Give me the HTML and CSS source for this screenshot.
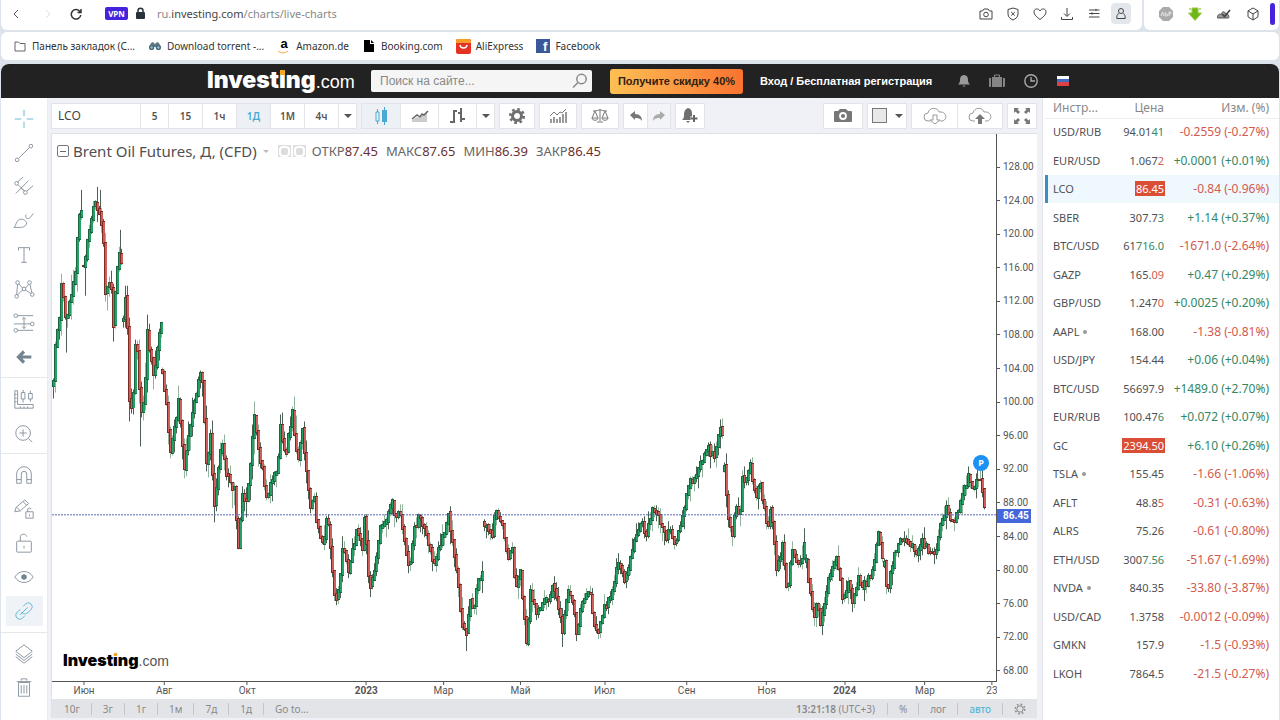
FILE: index.html
```html
<!DOCTYPE html>
<html lang="ru">
<head>
<meta charset="utf-8">
<title>Brent Oil Futures — Investing.com</title>
<link rel="stylesheet" href="styles.css">
</head>
<body>
<div class="nav-row">
  <div class="address-bar">
    <button class="nav-btn" aria-label="Назад"><svg width="14" height="14" viewBox="0 0 14 14"><path d="M9 3L5 7l4 4"/></svg></button>
    <button class="nav-btn faded" aria-label="Вперёд"><svg width="14" height="14" viewBox="0 0 14 14"><path d="M5 3l4 4-4 4"/></svg></button>
    <button class="nav-btn reload" aria-label="Обновить"><svg width="14" height="14" viewBox="0 0 14 14"><path d="M11 4.500A4.800 4.800 0 1 0 11.800 8M12 2v3.500H8.500"/></svg></button>
    <button class="vpn">VPN</button>
    <svg class="lock" width="11" height="13" viewBox="0 0 11 13"><path d="M3 6V3.800a2.500 2.500 0 0 1 5 0V6" fill="none" stroke="#26333a" stroke-width="1.500"/><rect x="1" y="5" width="9" height="7" rx="1" fill="#26333a"/></svg>
    <div class="url"><span>ru.</span><b>investing.com</b><span>/charts/live-charts</span></div>
    <div class="tools">
      <button aria-label="Снимок"><svg width="16" height="16" viewBox="0 0 16 16"><path d="M2 5h2.500L6 3h4l1.500 2H14v8H2z"/><circle cx="8" cy="8.500" r="2.300"/></svg></button>
      <button aria-label="Защита"><svg width="16" height="16" viewBox="0 0 16 16"><path d="M8 2l5 1.500V8c0 3-2.500 5-5 6-2.500-1-5-3-5-6V3.500zM6.200 6l3.600 3.600M9.800 6L6.200 9.600"/></svg></button>
      <button aria-label="Избранное"><svg width="16" height="16" viewBox="0 0 16 16"><path d="M8 13.500C5 11 2 9 2 5.800 2 2.500 6.500 1.800 8 5c1.500-3.200 6-2.500 6 .8C14 9 11 11 8 13.500z"/></svg></button>
      <button aria-label="Загрузки"><svg width="16" height="16" viewBox="0 0 16 16"><path d="M8 2v8M5 7.500l3 3 3-3M2.500 11v2.500h11V11"/></svg></button>
      <button aria-label="Настройки"><svg width="16" height="16" viewBox="0 0 16 16"><path d="M3 4h10.500M3 7.500h10.500M3 11h10.500M10 2.800v2.400M6 6.300v2.400"/></svg></button>
      <button class="active" aria-label="Профиль"><svg width="16" height="16" viewBox="0 0 16 16"><circle cx="8" cy="5" r="2.500"/><path d="M5.800 7.500C4 8.500 3.800 10 3.800 12.500h8.400c0-2.500-.2-4-2-5"/></svg></button>
    </div>
  </div>
  <div class="extensions">
    <button aria-label="AdBlock"><svg width="16" height="16" viewBox="0 0 16 16"><path d="M5 1h6l4 4v6l-4 4H5l-4-4V5z" fill="#aaa" stroke="none"/><path d="M3 10l1.500-4L6 10M7.200 6v4h1.500a1 1 0 0 0 0-2H7.200M11 10V6h1.300a1 1 0 0 1 0 2H11" stroke="#e6e6e6"/></svg></button>
    <button aria-label="SaveFrom"><svg width="16" height="16" viewBox="0 0 16 16"><path d="M5 2h6v5h3.500L8 14.500 1.500 7H5z" fill="#70b51c" stroke="#97cd38"/><path d="M2 3h2M12 3h2" stroke="#70b51c"/></svg></button>
    <button aria-label="Расширение"><svg width="16" height="16" viewBox="0 0 16 16"><path d="M1.500 12c0-4 2-4 3.500-3.500C6 5 9 5 9.500 8c3-1 4 3 3 4z" fill="#999" stroke="#555"/><path d="M6 8l2.500 2.500L14 4" stroke-width="1.600"/></svg></button>
    <button aria-label="Расширения"><svg width="16" height="16" viewBox="0 0 16 16"><path d="M8 2l5 2.800v6L8 14l-5-3.200v-6zM3 4.800L8 8l5-3.200M8 8v6"/></svg></button>
    <i class="side-mark"></i>
  </div>
</div>
<nav class="bookmarks">
  <a href="#"><svg width="14" height="14" viewBox="0 0 14 14"><path d="M2 3h3.500L7 4.500h5V12H2z" fill="none" stroke="#666"/></svg>Панель закладок (С...</a>
  <a href="#"><svg width="14" height="14" viewBox="0 0 14 14"><path d="M3 4l2-1 2 2 2-2 2 1 2 4H1z" fill="#607985"/><circle cx="3.600" cy="8.500" r="2.600" fill="#486774"/><circle cx="10.400" cy="8.500" r="2.600" fill="#486774"/><circle cx="3.600" cy="8.500" r="1.200" fill="#86c5e4"/><circle cx="10.400" cy="8.500" r="1.200" fill="#86c5e4"/></svg>Download torrent -...</a>
  <a href="#"><span class="amazon">a<svg width="12" height="4" viewBox="0 0 12 4"><path d="M1 1c3 2.500 7 2.500 10 0" fill="none" stroke="#f7a63c"/></svg></span>Amazon.de</a>
  <a href="#"><svg width="14" height="14" viewBox="0 0 14 14"><path d="M2 1h6v4h4v8H2z"/><path d="M9 1l3 3H9z"/></svg>Booking.com</a>
  <a href="#"><svg width="15" height="15" viewBox="0 0 15 15"><path d="M0 2q0-2 2-2h11q2 0 2 2v11q0 2-2 2H2q-2 0-2-2z" fill="#e43225"/><path d="M0 2q0-2 2-2h11q2 0 2 2v2H0z" fill="#f99b29"/><path d="M4 6c.5 4 6.500 4 7 0" fill="none" stroke="#fff" stroke-width="1.500"/></svg>AliExpress</a>
  <a href="#"><span class="fb">f</span>Facebook</a>
</nav>

<div class="site">
  <header class="site-header">
    <a class="logo" href="#"><b>Invest<span class="dot-i">i</span>ng</b><span class="com">.com</span></a>
    <form class="search"><input type="search" aria-label="Поиск" placeholder="Поиск на сайте..."><button type="button" aria-label="Найти"><svg width="16" height="16" viewBox="0 0 16 16"><circle cx="9.500" cy="6" r="4.700"/><path d="M6 9.500L1 14.500"/></svg></button></form>
    <button class="promo">Получите скидку 40%</button>
    <a class="login" href="#">Вход / Бесплатная регистрация</a>
    <div class="header-icons">
      <svg width="14" height="14" viewBox="0 0 14 14"><path d="M7 1c3 .5 4 2 4 5 0 2 .5 3 2 4.500H1C2.500 9 3 8 3 6c0-3 1-4.500 4-5zM5.500 11.500h3L7 13z" fill="#9a9a9a"/></svg>
      <svg width="16" height="14" viewBox="0 0 16 14"><path d="M0 4h2v9H1q-1 0-1-1zM3 3h10v10H3zM14 4h2v8q0 1-1 1h-1z" fill="#858585"/><path d="M5.500 3V1h5v2" fill="none" stroke="#858585"/></svg>
      <svg width="16" height="16" viewBox="0 0 16 16"><circle cx="8" cy="8" r="6.200" fill="none" stroke="#aaa" stroke-width="1.400"/><path d="M8 4v4h4" fill="none" stroke="#aaa" stroke-width="1.400"/></svg>
      <svg width="12" height="10" viewBox="0 0 12 10"><path fill="#fff" d="M0 0h12v4H0z"/><path fill="#3f6dc0" d="M0 3h12v4H0z"/><path fill="#dc4145" d="M0 6h12v4H0z"/></svg>
    </div>
  </header>

  <main class="workspace">
    <aside class="draw-tools">
      <div class="tool-group">
        <button aria-label="Перекрестие"><svg viewBox="0 0 24 24"><path d="M2 12h7M15 12h7M12 2v7M12 15v7" stroke="#62aed3"/></svg></button>
        <button aria-label="Линия"><svg viewBox="0 0 24 24"><circle cx="4.500" cy="19.500" r="2"/><circle cx="19.500" cy="4.500" r="2"/><path d="M6 18L18 6"/></svg></button>
        <button aria-label="Вилы"><svg viewBox="0 0 24 24"><circle cx="4" cy="8" r="2"/><circle cx="13.500" cy="18" r="2"/><path d="M5.500 9.500l7 7M5 6.500L11 1M3 19L17 5M15 16.500l7-6M9 13l3 3"/></svg></button>
        <button aria-label="Кисть"><svg viewBox="0 0 24 24"><path d="M1 19c3-2 2-9 8-9 3 0 5 2 6 4-1 4-4 5-7 5zM22 4l-3 4c-3 3-6 1-5-3"/></svg></button>
        <button aria-label="Текст"><svg viewBox="0 0 24 24"><path d="M6 7V4h12v3M12 4v16M9 20h6"/></svg></button>
        <button aria-label="Фигуры"><svg viewBox="0 0 24 24"><circle cx="5" cy="5" r="2"/><circle cx="18" cy="5" r="2"/><circle cx="4" cy="20" r="2"/><circle cx="21" cy="18" r="2"/><circle cx="12" cy="12" r="2"/><path d="M5 7L4 18M6.500 6.500L10.500 11M13.500 11l3.500-4M18.500 7l2 9M5 18.500L10.500 13M13.500 13l6 4"/></svg></button>
        <button aria-label="Прогноз"><svg viewBox="0 0 24 24"><circle cx="3" cy="4" r="2"/><circle cx="3" cy="20" r="2"/><circle cx="21" cy="13" r="2"/><path d="M5 4h17M5 20h17M1 13h18M12 6v12M10 8l2-2 2 2M10 16l2 2 2-2"/></svg></button>
        <button aria-label="Стрелка"><svg viewBox="0 0 24 24"><path d="M20 12H8M12 6l-6 6 6 6" stroke="#75858f" stroke-width="3.500"/></svg></button>
      </div>
      <div class="tool-group">
        <button aria-label="Линейка"><svg viewBox="0 0 24 24"><path d="M2 3h3v15h17v4H2zM2 7h2M2 11h2M2 15h2M8 22v-2M12 22v-2M16 22v-2M9 5h4v7H9zM11 2v3M11 12v4M17 6h4v6h-4zM19 3v3M19 12v3"/></svg></button>
        <button aria-label="Увеличить"><svg viewBox="0 0 24 24"><circle cx="11" cy="12" r="8"/><path d="M17 18l4 4M7 12h8M11 8v8"/></svg></button>
      </div>
      <div class="tool-group">
        <button aria-label="Магнит"><svg viewBox="0 0 24 24"><path d="M4 21V11a8 8 0 0 1 16 0v10h-5V11a3 3 0 0 0-6 0v10zM4 17h5M15 17h5"/></svg></button>
        <button aria-label="Рисование"><svg viewBox="0 0 24 24"><path d="M2 15l1.500-5L13 2l4 4-9 8zM4 10l4 4M11 4l4 4M14 15h8v7h-8zM16 15v-3q2-2 4 0M18 18v2"/></svg></button>
        <button aria-label="Замок"><svg viewBox="0 0 24 24"><rect x="4" y="10" width="16" height="12" rx="1"/><path d="M8 10V5c0-3 6-4 7 0M12 15v3"/></svg></button>
        <button aria-label="Показать"><svg viewBox="0 0 24 24"><path d="M2 12c5-8 15-8 20 0-5 8-15 8-20 0z"/><circle cx="12" cy="12" r="3" fill="#75858f" stroke="none"/></svg></button>
        <button class="selected" aria-label="Связать"><svg viewBox="0 0 24 24"><path d="M11 7l3-3c4-3 9 2 6 6l-4 4c-3 2-6 1-7-1M13 17l-3 3c-4 3-9-2-6-6l4-4M8 16l8-8" stroke="#52b3d4"/></svg></button>
      </div>
      <div class="tool-group">
        <button aria-label="Слои"><svg viewBox="0 0 24 24"><path d="M12 2l9 7-9 7-9-7zM3 12l9 7 9-7M3 15l9 7 9-7"/></svg></button>
        <button aria-label="Удалить"><svg viewBox="0 0 24 24"><path d="M6 6h12v15H6zM4 5h16M9 4V2h6v2M9 9v9M12 9v9M15 9v9"/></svg></button>
      </div>
    </aside>

    <section class="chart-column">
      <div class="chart-toolbar">
        <div class="btn-group">
          <input class="symbol" aria-label="Инструмент" value="LCO">
          <button class="w-s">5</button><button>15</button><button>1ч</button><button class="on">1Д</button><button>1М</button><button>4ч</button><button class="caret" aria-label="Ещё"></button>
        </div>
        <div class="btn-group">
          <button class="w-l on" aria-label="Свечи"><svg width="18" height="20" viewBox="0 0 18 20"><path d="M4 6h3v9H4zM5.500 3v3M5.500 15v3" fill="none" stroke="#4aa9d2"/><path d="M10 4h5v12h-5zM12 1h1v18h-1z" fill="#4aa9d2"/></svg></button>
          <button class="w-l" aria-label="Область"><svg width="18" height="14" viewBox="0 0 18 14"><path d="M1 11l5-3 3 1 7-7v11H1z" fill="#ccc"/><path d="M1 10l5-4 3 2 2-3 2 1 4-4" fill="none" stroke="#666" stroke-width="1.500"/></svg></button>
          <button class="w-l" aria-label="Бары"><svg width="18" height="18" viewBox="0 0 18 18"><path d="M5 3v13M1 15h4M5 4h3M12 1v14M9 6h3M12 12h4" fill="none" stroke="#666" stroke-width="2"/></svg></button>
          <button class="caret" aria-label="Ещё"></button>
        </div>
        <div class="btn-group"><button aria-label="Настройки"><svg width="18" height="18" viewBox="0 0 18 18"><circle cx="9" cy="9" r="4.500" fill="none" stroke="#707070" stroke-width="3"/><circle cx="9" cy="9" r="6.800" fill="none" stroke="#707070" stroke-width="2.500" stroke-dasharray="2.700 2.640"/></svg></button></div>
        <div class="btn-group"><button class="w-m" aria-label="Индикаторы"><svg width="18" height="16" viewBox="0 0 18 16"><path d="M2 15v-4M5 15V9M8 15v-4M11 15V9M14 15V6M17 15V4" stroke="#777" stroke-width="1.500"/><path d="M1 8l4-4 3 3 3-3 2 1 4-4" fill="none" stroke="#777"/></svg></button></div>
        <div class="btn-group"><button class="w-m" aria-label="Сравнить"><svg width="18" height="16" viewBox="0 0 18 16"><path d="M9 1v12M6 14h6M2 3c4 0 5-1 7-1s3 1 7 1M4 3l-3 7h6L4 3M14 3l-3 7h6l-3-7M1 10c0 3 6 3 6 0M11 10c0 3 6 3 6 0" fill="none" stroke="#777"/></svg></button></div>
        <div class="btn-group narrow">
          <button aria-label="Отменить"><svg width="14" height="12" viewBox="0 0 14 12"><path d="M1 5l5-4v3c5 0 7 3 7 7-2-3-4-3-7-3v2z" fill="#777"/></svg></button>
          <button class="dim" aria-label="Повторить"><svg width="14" height="12" viewBox="0 0 14 12"><path d="M13 5L8 1v3C3 4 1 7 1 11c2-3 4-3 7-3v2z" fill="#aaa"/></svg></button>
        </div>
        <div class="btn-group"><button class="w-s" aria-label="Оповещение"><svg width="18" height="17" viewBox="0 0 18 17"><path d="M7 1c4 1 4 4 4 6 0 1 1 2 2 2v4H1c2-2 2-3 2-6 0-2 1-5 4-6zM5 14h4l-2 2z" fill="#6f6f6f"/><path d="M13 8v7M9.500 11.500h7" stroke="#fff" stroke-width="4"/><path d="M13 8v7M9.500 11.500h7" stroke="#666" stroke-width="2"/></svg></button></div>
        <span class="spacer"></span>
        <div class="btn-group"><button class="w-l" aria-label="Снимок"><svg width="18" height="15" viewBox="0 0 18 15"><path d="M0 4q0-1 1-1h3l2-2h6l2 2h3q1 0 1 1v9q0 1-1 1H1q-1 0-1-1z" fill="#777"/><circle cx="9" cy="8" r="3" fill="none" stroke="#fff" stroke-width="1.800"/></svg></button></div>
        <div class="btn-group"><button class="w-l layout" aria-label="Макет"><i class="square"></i><i class="tri"></i></button></div>
        <div class="btn-group">
          <button class="w-xl" aria-label="Загрузить"><svg width="24" height="18" viewBox="0 0 24 18"><path d="M7 14H5a4 4 0 0 1 0-8C6 0 15 0 16 5c8-1 9 8 3 9h-2M10 8h4v5h3l-5 4-5-4h3z" fill="none" stroke="#999"/></svg></button>
          <button class="w-xl" aria-label="Сохранить"><svg width="24" height="18" viewBox="0 0 24 18"><path d="M7 14H5a4 4 0 0 1 0-8C6 0 15 0 16 5c8-1 9 8 3 9h-2" fill="none" stroke="#999"/><path d="M10 17v-5H7l5-5 5 5h-3v5z" fill="#777"/></svg></button>
        </div>
        <div class="btn-group"><button class="w-s" aria-label="Во весь экран"><svg width="16" height="16" viewBox="0 0 16 16"><path d="M0 0h5L3.500 1.500 6 4 4 6 1.500 3.500 0 5zM16 0h-5l1.500 1.500L10 4l2 2 2.500-2.500L16 5zM0 16h5l-1.500-1.500L6 12l-2-2-2.500 2.500L0 11zM16 16h-5l1.500-1.500L10 12l2-2 2.500 2.500L16 11z" fill="#777"/></svg></button></div>
      </div>

      <div class="chart">
        <div class="plot">
          <svg id="candles" viewBox="0 0 944 548" preserveAspectRatio="none" aria-label="График Brent"></svg>
          <div class="legend">
            <span class="collapse"></span><h1>Brent Oil Futures, Д, (CFD)</h1><i class="tri pale"></i>
            <span class="chips"><i></i><i></i></span>
            <span class="ohlc">ОТКР<b>87.45</b></span><span class="ohlc">МАКС<b>87.65</b></span><span class="ohlc">МИН<b>86.39</b></span><span class="ohlc">ЗАКР<b>86.45</b></span>
          </div>
          <div class="logo watermark"><b>Invest<span class="dot-i">i</span>ng</b><span class="com">.com</span></div>
          <span class="pin">P</span>
        </div>
        <div class="price-axis">
          <span>128.00</span><span>124.00</span><span>120.00</span><span>116.00</span><span>112.00</span><span>108.00</span><span>104.00</span><span>100.00</span><span>96.00</span><span>92.00</span><span>88.00</span><span>84.00</span><span>80.00</span><span>76.00</span><span>72.00</span><span>68.00</span>
          <b class="last-price">86.45</b>
        </div>
        <div class="time-axis" id="time-axis"></div>
      </div>
      <footer class="range-bar">
        <button>10г</button><button>3г</button><button>1г</button><button>1м</button><button>7д</button><button>1д</button><button>Go to...</button>
        <span class="clock"><b>13:21:18</b> (UTC+3)</span>
        <button>%</button><button>лог</button><button class="auto">авто</button><button aria-label="Настройки шкалы"><svg width="12" height="12" viewBox="0 0 12 12"><circle cx="6" cy="6" r="3.200" fill="none" stroke="#888"/><circle cx="6" cy="6" r="4.800" fill="none" stroke="#888" stroke-width="1.500" stroke-dasharray="1.700 2.070"/></svg></button>
      </footer>
    </section>

    <aside class="watchlist">
      <table>
        <thead><tr><th>Инстр...</th><th>Цена</th><th>Изм. (%)</th></tr></thead>
        <tbody>
          <tr><td>USD/RUB</td><td>94.01<i class="up">41</i></td><td class="down">-0.2559 (-0.27%)</td></tr>
          <tr><td>EUR/USD</td><td>1.067<i class="down">2</i></td><td class="up">+0.0001 (+0.01%)</td></tr>
          <tr class="current"><td>LCO</td><td><mark>86.45</mark></td><td class="down">-0.84 (-0.96%)</td></tr>
          <tr><td>SBER</td><td>307.7<i class="up">3</i></td><td class="up">+1.14 (+0.37%)</td></tr>
          <tr><td>BTC/USD</td><td>61<i class="up">716.0</i></td><td class="down">-1671.0 (-2.64%)</td></tr>
          <tr><td>GAZP</td><td>165.<i class="down">09</i></td><td class="up">+0.47 (+0.29%)</td></tr>
          <tr><td>GBP/USD</td><td>1.247<i class="down">0</i></td><td class="up">+0.0025 (+0.20%)</td></tr>
          <tr><td>AAPL<s></s></td><td>168.00</td><td class="down">-1.38 (-0.81%)</td></tr>
          <tr><td>USD/JPY</td><td>154.44</td><td class="up">+0.06 (+0.04%)</td></tr>
          <tr><td>BTC/USD</td><td>56697.9</td><td class="up">+1489.0 (+2.70%)</td></tr>
          <tr><td>EUR/RUB</td><td>100.47<i class="up">6</i></td><td class="up">+0.072 (+0.07%)</td></tr>
          <tr><td>GC</td><td><mark>2394.50</mark></td><td class="up">+6.10 (+0.26%)</td></tr>
          <tr><td>TSLA<s></s></td><td>155.45</td><td class="down">-1.66 (-1.06%)</td></tr>
          <tr><td>AFLT</td><td>48.8<i class="down">5</i></td><td class="down">-0.31 (-0.63%)</td></tr>
          <tr><td>ALRS</td><td>75.26</td><td class="down">-0.61 (-0.80%)</td></tr>
          <tr><td>ETH/USD</td><td>300<i class="up">7.56</i></td><td class="down">-51.67 (-1.69%)</td></tr>
          <tr><td>NVDA<s></s></td><td>840.35</td><td class="down">-33.80 (-3.87%)</td></tr>
          <tr><td>USD/CAD</td><td>1.3758</td><td class="down">-0.0012 (-0.09%)</td></tr>
          <tr><td>GMKN</td><td>157.9</td><td class="down">-1.5 (-0.93%)</td></tr>
          <tr><td>LKOH</td><td>7864.5</td><td class="down">-21.5 (-0.27%)</td></tr>
        </tbody>
      </table>
    </aside>
  </main>
</div>
<script src="chart.js"></script>
</body>
</html>
```
FILE: styles.css
```css
* { box-sizing: border-box; }
body { margin: 0; min-height: 100vh; display: flex; flex-direction: column; background: #dce3ea; font-family: "Noto Sans", "Open Sans", sans-serif; font-size: 11px; color: #444; }
button, input { font: inherit; color: inherit; margin: 0; padding: 0; border: 0; background: none; }
a { color: inherit; text-decoration: none; }
i, s { font-style: normal; text-decoration: none; }
svg { display: block; flex: none; }

.nav-row { display: flex; gap: 2px; height: 30px; padding: 0 1px; margin-bottom: 2px; }
.address-bar, .extensions { display: flex; align-items: center; background: #fff; border-radius: 0 0 6px 6px; padding-bottom: 3px; }
.address-bar { flex: 1; padding-left: 8px; }
.nav-btn { width: 14px; margin-right: 18px; }
.nav-btn svg { fill: none; stroke: #555; }
.nav-btn.faded svg { stroke: #ddd; }
.nav-btn.faded { margin-right: 14px; }
.reload { margin-right: 22px; }
.reload svg { stroke: #333; stroke-width: 1.500; }
.vpn { width: 23px; height: 13px; background: #4523dc; color: #fff; border-radius: 2px; font-size: 8px; font-weight: 700; line-height: 13px; margin-right: 7px; }
.lock { margin-right: 11px; }
.url { flex: 1; color: #888; }
.url b { color: #444; font-weight: 400; }
.tools, .extensions { display: flex; gap: 7px; }
.tools { padding-right: 11px; }
.tools button, .extensions button { width: 20px; height: 21px; display: grid; place-items: center; border-radius: 4px; }
.tools svg, .extensions svg { fill: none; stroke: #444; }
.tools .active { background: #e3e7ec; }
.extensions { gap: 9px; padding-left: 12px; }
.side-mark { width: 5px; height: 22px; border-radius: 3px; background: #4523dc; margin: 0 4px 0 -2px; }

.bookmarks { display: flex; align-items: center; gap: 13px; height: 28px; margin: 0 1px 4px; padding-left: 12px; background: #fff; border-radius: 6px; }
.bookmarks a { display: flex; align-items: center; gap: 5px; font-size: 10px; color: #333; }
.amazon { width: 14px; height: 16px; text-align: center; font: 700 13px/12px "Liberation Sans", sans-serif; color: #000; }
.fb { width: 14px; height: 14px; background: #3b5998; color: #fff; font: 700 13px/15px "Liberation Sans", sans-serif; text-align: right; padding-right: 3px; }

.site { flex: 1; display: flex; flex-direction: column; margin: 0 1px; background: #fff; border-radius: 8px 8px 0 0; overflow: hidden; }
.site-header { display: flex; align-items: center; height: 34px; padding-left: 206px; background: #222; }
.logo { display: flex; align-items: baseline; width: 164px; color: #fff; font: 22px/30px "Liberation Sans", sans-serif; }
.logo b { font: 900 23px/30px Inter, sans-serif; }
.logo .com { font-size: 18px; }
.dot-i { position: relative; }
.dot-i::after { content: ""; position: absolute; left: 1px; top: 4px; width: 5px; height: 5px; background: #f5a623; }
.search { display: flex; width: 221px; height: 22px; background: #f5f5f5; border-radius: 2px; margin-right: 18px; padding: 0 4px 0 9px; align-items: center; font: 12px "Liberation Sans", sans-serif; }
.search input { flex: 1; min-width: 0; outline: 0; }
.search input::placeholder { color: #888; opacity: 1; }
.search svg { fill: none; stroke: #888; stroke-width: 1.500; }
.promo { width: 133px; height: 25px; border-radius: 3px; background: linear-gradient(90deg, #fdc055, #f97330); color: #302010; font: 700 11px "Liberation Sans", sans-serif; margin-right: 17px; }
.login { font: 700 11px "Liberation Sans", sans-serif; color: #fff; margin-right: 25px; white-space: nowrap; }
.header-icons { display: flex; align-items: center; gap: 18px; }

.workspace { flex: 1; display: flex; background: #f0f1f6; }
.draw-tools { width: 47px; background: #fff; margin-right: 3px; border-right: 1px solid #e8ebf0; padding-top: 4px; }
.tool-group { display: flex; flex-direction: column; align-items: center; border-bottom: 1px solid #e4e8ed; padding-bottom: 3px; margin-bottom: 4px; }
.tool-group:last-child { border: 0; }
.tool-group button { width: 37px; height: 34px; display: grid; place-items: center; }
.tool-group svg { width: 22px; height: 22px; fill: none; stroke: #84909b; }
.tool-group .selected { background: #eff2f6; height: 30px; margin: 2px 0 3px; }

.chart-column { flex: 1; min-width: 0; display: flex; flex-direction: column; }
.chart-toolbar { display: flex; align-items: center; gap: 4px; height: 36px; border-bottom: 1px solid #dfe1e6; }
.btn-group { display: flex; background: #fff; border: 1px solid #e1e3e8; height: 26px; }
.btn-group > * + * { border-left: 1px solid #e1e3e8; }
.btn-group button { width: 34px; display: grid; place-items: center; font-size: 10px; font-weight: 600; color: #555; }
.btn-group button.w-s { width: 28px; }
.btn-group button.w-m { width: 36px; }
.btn-group button.w-l { width: 38px; }
.btn-group button.w-xl { width: 45px; }
.btn-group button.caret { width: 18px; }
.btn-group.narrow button { width: 23px; }
.btn-group button.on { background: #edf1f5; color: #4aa9d2; }
.btn-group .dim { background: #f3f4f7; }
.btn-group button.layout { display: flex; align-items: center; justify-content: center; gap: 8px; }
.symbol { width: 88px; padding-left: 6px; font-size: 12px; color: #444; }
.spacer { flex: 1; }
.caret::before, .tri { content: ""; border: 4px solid transparent; border-top-color: #555; border-bottom: 0; }
.tri.pale { border-top-color: #bbb; border-width: 3px 3px 0; margin: 0 9px 0 6px; }
.square { width: 15px; height: 15px; border: 1px solid #777; background: #e8e8e8; }

.chart { flex: 1; display: grid; grid-template-columns: 1fr 40px; grid-template-rows: 1fr 17px; background: #fff; border-left: 1px solid #dfe1e6; }
.plot { position: relative; border-right: 1px solid #555; border-bottom: 1px solid #555; }
.plot > svg { position: absolute; inset: 0; width: 100%; height: 100%; }
.legend { position: relative; display: flex; align-items: center; height: 34px; padding-left: 5px; font-size: 13px; color: #666; }
.legend h1 { margin: 0; font-size: 15px; font-weight: 400; color: #505050; }
.collapse { width: 12px; height: 12px; border: 1px solid #777; border-radius: 2px; margin-right: 4px; display: grid; align-items: center; padding: 0 2px; }
.collapse::before { content: ""; height: 1px; background: #666; }
.chips { display: flex; gap: 2px; margin-right: 6px; }
.chips i { width: 13px; height: 12px; background: #ddd; display: grid; place-items: center; }
.chips i::before { content: ""; width: 7px; height: 7px; border: 2px solid #fff; border-radius: 4px; }
.ohlc { margin-right: 8px; }
.ohlc b { color: #6b2f2f; font-weight: 400; }
.watermark { position: absolute; left: 11px; bottom: 10px; width: auto; color: #555; }
.watermark, .watermark b { font-size: 16px; line-height: 20px; }
.watermark b { color: #000; }
.watermark .com { font-size: 14px; }
.watermark .dot-i::after { left: 1px; top: 3px; width: 3px; height: 3px; }
.pin { position: absolute; right: 7px; top: 321px; width: 16px; height: 16px; border-radius: 8px; background: #1b91f5; color: #fff; font-size: 9px; font-weight: 700; line-height: 16px; text-align: center; }
.price-axis { position: relative; display: flex; flex-direction: column; justify-content: space-between; padding: 27px 0 5px; font: 10px/12px Roboto, sans-serif; color: #555; }
.price-axis span { display: flex; align-items: center; gap: 3px; }
.price-axis span::before { content: ""; width: 3px; height: 1px; background: #555; }
.last-price { position: absolute; left: 0; top: 375px; width: 34px; padding-left: 6px; background: #4468dc; color: #fff; line-height: 14px; }
.time-axis { grid-column: 1; position: relative; overflow: hidden; font: 10px/12px Roboto, sans-serif; color: #555; }
.time-axis span { position: absolute; top: 0; transform: translateX(-50%); display: flex; flex-direction: column; align-items: center; }
.time-axis span::before { content: ""; width: 1px; height: 3px; background: #555; }
.time-axis .year { font-weight: 700; }
.range-bar { display: flex; align-items: center; height: 19px; margin-bottom: 2px; background: #e3e4e8; color: #888; font-size: 10px; border-left: 1px solid #dfe1e6; }
.range-bar button { padding: 0 11px; line-height: 12px; border-left: 1px solid #c4c6cb; }
.range-bar button:first-child { border-color: transparent; }
.clock { margin-left: auto; padding-right: 12px; }
.clock b { font-weight: 600; }
.range-bar .auto { color: #45b2d4; }

.watchlist { width: 237px; margin-left: 5px; background: #fff; border-left: 1px solid #e2e4ea; padding-left: 2px; }
table { width: 100%; border-collapse: collapse; table-layout: fixed; font-size: 12px; color: #4e5054; }
th, td { padding: 0; text-align: right; white-space: nowrap; }
th { height: 20px; line-height: 19px; font-weight: 400; color: #888; border-bottom: 1px solid #eee; }
th:first-child, td:first-child { text-align: left; padding-left: 8px; width: 76px; }
th:nth-child(2), td:nth-child(2) { width: 43px; }
th:last-child, td:last-child { padding-right: 10px; }
td { height: 28px; line-height: 18px; font-size: 11px; }
td:last-child { font-size: 12px; }
tbody tr:nth-child(even) td { height: 29px; }
.up { color: #338765; }
.down { color: #d25a50; }
.current td { background: #eff8fd; }
.current td:first-child { box-shadow: inset 3px 0 #3b8fc0; }
mark { background: #da4e35; color: #fff; padding: 0 1px; margin-right: -1px; }
td s { display: inline-block; width: 4px; height: 4px; border-radius: 2px; background: #999; margin-left: 4px; vertical-align: 2px; }
```
FILE: chart.js
```js
// Swing points of the price line in plot units; each inner list is a run without a gap.
const runs = [
  [[1,250],[2,222],[4,201],[7,186],[9,151],[11,165],[14,190],[17,166],[20,156],[22,146],[24,121],[27,81],[29,77]],
  [[31,132],[34,123],[36,90],[38,101],[40,75],[43,72],[46,80],[48,84],[51,106],[53,156],[56,149],[59,156],[61,187],[64,141],[67,116],[70,132]],
  [[71,186],[74,155],[77,262],[80,280],[83,208],[85,214],[88,276],[91,272],[93,246],[95,200],[98,218],[101,240],[104,226],[107,198],[109,186]],
  [[110,236],[114,269],[118,322],[122,296],[126,269],[132,334],[137,298],[143,262],[148,236],[150,245],[154,330],[158,303],[162,369],[169,310],[175,344],[182,356],[186,410],[190,362],[194,366],[198,328],[202,279],[206,313],[214,363],[225,333],[228,293],[233,322],[240,280],[245,329],[250,299],[253,333],[258,373],[262,366],[265,393],[271,413],[273,389],[275,379],[281,453],[285,466],[291,409],[296,439],[305,394],[310,413],[312,386],[317,453],[323,436],[328,393],[335,383],[340,368],[343,383],[347,373],[357,438],[361,399],[367,383],[373,396],[381,431],[388,409],[396,383],[401,416],[406,453],[410,493],[414,496],[418,466],[421,476],[425,448],[431,439]],
  [[432,389],[440,399],[444,374],[451,396],[456,426],[460,416],[463,454],[468,436],[474,508],[478,459],[485,483],[491,463],[496,469],[500,449],[505,466],[510,495],[515,456],[520,466],[524,500],[530,469],[538,461],[541,486],[545,499],[551,476],[558,463],[567,426],[571,448],[577,433],[581,406],[590,389],[594,406],[598,383],[603,374],[613,406],[617,396],[622,409],[631,383],[636,353],[641,346],[650,326],[656,314],[662,326],[668,296],[671,308]],
  [[672,336],[676,383],[680,399],[683,369],[687,388],[690,346],[694,349],[698,330],[703,366],[707,349],[712,371],[715,394],[718,379],[721,399],[724,439],[730,413],[735,458],[739,416],[747,436],[752,411]],
  [[754,429],[761,484],[765,466],[768,493],[773,463],[778,439],[785,426],[791,469],[796,446],[800,468],[806,446],[813,454],[821,434],[826,401],[830,421]],
  [[832,431],[835,458],[842,423],[848,410],[855,406],[863,421],[870,406],[875,416],[883,418],[888,393],[894,374],[899,389],[906,379],[911,356],[916,343],[921,356],[927,344],[930,356],[933,380]]
];

let seed = 17;
const rand = () => (seed = (seed * 16807) % 2147483647) / 2147483647;
const shapes = { wick: "", pale: "" };
const bodies = [];

runs.forEach(run => {
  let k = 0;
  let prev = run[0][1];
  for (let x = run[0][0]; x <= run[run.length - 1][0]; x += 2) {
    while (k < run.length - 2 && run[k + 1][0] < x) k++;
    const [x0, y0] = run[k];
    const [x1, y1] = run[k + 1];
    const t = (x - x0) / (x1 - x0);
    const close = y0 + (y1 - y0) * Math.min(1, t) + (rand() - 0.5) * 8;
    const early = x < 260 ? 1.4 : 1;
    const top = Math.round(Math.min(prev, close) - rand() * 2);
    const bottom = Math.round(Math.max(prev, close) + 1 + rand() * 2);
    const hi = Math.round(top - rand() * rand() * 15 * early);
    const lo = Math.round(bottom + rand() * rand() * 15 * early);
    shapes[rand() < 0.5 ? "pale" : "wick"] += `M${x + 0.5} ${hi}V${lo}`;
    // Dark outline first, then the lit core of the body.
    const [edge, core] = close < prev ? ["#1b6540", "#22a066"] : ["#7a2b24", "#cf6059"];
    bodies.push(`<path d="M${x - 1} ${top}h3V${bottom}h-3z" fill="${edge}"/><path d="M${x} ${top + 1}h2V${Math.max(top + 1, bottom - 1)}h-2z" fill="${core}"/>`);
    prev = close;
  }
});
// Long tails of the sharpest sessions.
[[29,56,80],[48,56,90],[33,140,162],[14,180,219],[68,96,125],[61,180,208],[88,270,313],[414,495,518],[668,286,300],[925,325,348],[284,455,472]].forEach(([x, a, b]) => { shapes.wick += `M${x + 0.5} ${a}V${b}`; });

document.getElementById("candles").innerHTML =
  `<g fill="none" shape-rendering="crispEdges"><path d="${shapes.pale}" stroke="#94b39f"/><path d="${shapes.wick}" stroke="#4a6053"/></g>
   <g shape-rendering="crispEdges">${bodies.join("")}</g>
   <path d="M0 381.500H944" stroke="#5b6cb5" stroke-dasharray="2 1"/>`;

const ticks = [["Июн",32],["Авг",112],["Окт",195],["2023",314],["Мар",391],["Май",468],["Июл",552],["Сен",634],["Ноя",714],["2024",792],["Мар",872],["23",939]];
const axis = document.getElementById("time-axis");
ticks.forEach(([label, x]) => {
  const el = document.createElement("span");
  el.textContent = label;
  el.style.left = x / 944 * 100 + "%";
  if (label.length === 4) el.className = "year";
  axis.append(el);
});
```
